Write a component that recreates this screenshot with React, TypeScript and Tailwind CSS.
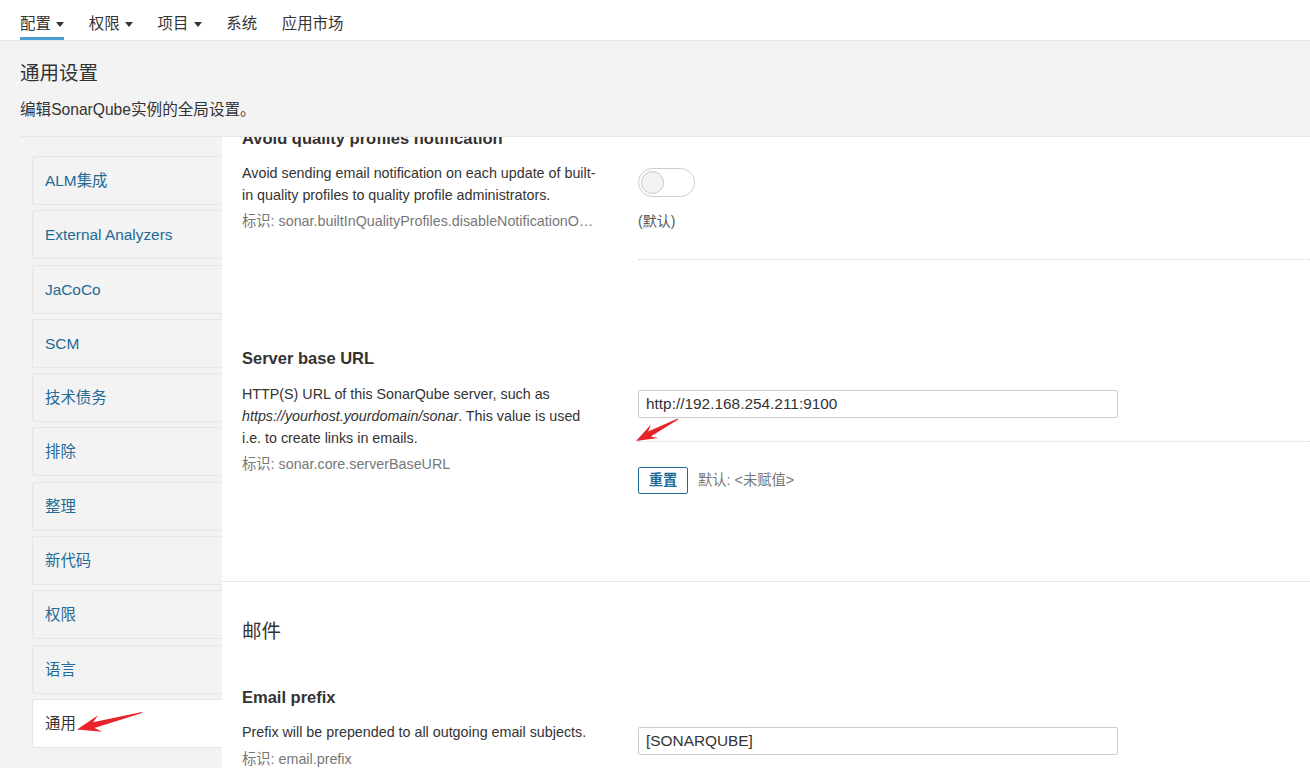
import React from "react";

function arrowPoints(tx: number, ty: number, px: number, py: number, hl: number, hw: number, sw: number) {
  const dx = px - tx;
  const dy = py - ty;
  const len = Math.sqrt(dx * dx + dy * dy);
  const ux = dx / len;
  const uy = dy / len;
  const nx = -uy;
  const ny = ux;
  const jx = px - ux * hl * 0.72;
  const jy = py - uy * hl * 0.72;
  const bx = px - ux * hl;
  const by = py - uy * hl;
  const pts: [number, number][] = [
    [tx + nx * 0.5, ty + ny * 0.5],
    [jx + (nx * sw) / 2, jy + (ny * sw) / 2],
    [bx + (nx * hw) / 2, by + (ny * hw) / 2],
    [px, py],
    [bx - (nx * hw) / 2, by - (ny * hw) / 2],
    [jx - (nx * sw) / 2, jy - (ny * sw) / 2],
    [tx - nx * 0.5, ty - ny * 0.5],
  ];
  return pts.map((p) => `${p[0].toFixed(1)},${p[1].toFixed(1)}`).join(" ");
}

const navItems = [
  { label: "配置", caret: true, active: true },
  { label: "权限", caret: true },
  { label: "项目", caret: true },
  { label: "系统" },
  { label: "应用市场" },
];

const sideItems = [
  "ALM集成",
  "External Analyzers",
  "JaCoCo",
  "SCM",
  "技术债务",
  "排除",
  "整理",
  "新代码",
  "权限",
  "语言",
  "通用",
];

export default function App() {
  return (
    <div className="relative w-[1310px] h-[768px] overflow-hidden bg-[#f3f3f3] text-[#333] font-['Liberation_Sans','Noto_Sans_CJK_SC',sans-serif]">
      {/* top nav */}
      <div className="h-[41px] bg-white border-b border-[#e6e6e6] flex items-stretch pl-[20px] text-[15.4px]">
        {navItems.map((it) => (
          <div
            key={it.label}
            className={
              "flex items-center pt-[11px] mr-[24.6px] border-b-[3px] " +
              (it.active ? "border-[#4b9fd5]" : "border-transparent")
            }
          >
            <span className="leading-[20px]">{it.label}</span>
            {it.caret && (
              <span className="ml-[5.4px] w-0 h-0 border-x-[4.5px] border-x-transparent border-t-[5px] border-t-[#333]" />
            )}
          </div>
        ))}
      </div>

      {/* page header */}
      <div className="ml-[20px] h-[96px] border-b border-[#e6e6e6] pt-[20px]">
        <div className="text-[19.5px] leading-[24px]">通用设置</div>
        <div className="mt-[15px] text-[15.6px] leading-[20px]">编辑SonarQube实例的全局设置。</div>
      </div>

      {/* main */}
      <div className="flex h-[631px]">
        {/* sidebar */}
        <div className="w-[222px] shrink-0 pl-[32px] pt-[19px] flex flex-col gap-[5.3px]">
          {sideItems.map((s) => {
            const active = s === "通用";
            return (
              <div
                key={s}
                className={
                  "h-[49px] shrink-0 border border-r-0 border-[#e6e6e6] rounded-l-[3px] pl-[12px] flex items-center text-[15.4px] " +
                  (active ? "bg-white text-[#333]" : "bg-[#f3f3f3] text-[#236a97]")
                }
              >
                {s}
              </div>
            );
          })}
        </div>

        {/* content */}
        <div className="flex-1 bg-white overflow-hidden">
          {/* setting 1 */}
          <div className="h-[211px] flex pl-[20px]">
            <div className="w-[356px] mr-[40px] shrink-0">
              <div className="-mt-[9px] text-[16.5px] font-bold leading-[20px]">Avoid quality profiles notification</div>
              <div className="mt-[14px] text-[14.3px] leading-[22px]">
                Avoid sending email notification on each update of built-
                <br />
                in quality profiles to quality profile administrators.
              </div>
              <div className="mt-[6px] text-[14.3px] leading-[18px] text-[#777] truncate">
                标识: sonar.builtInQualityProfiles.disableNotificationOnUpdate
              </div>
            </div>
            <div className="flex-1 pt-[31px]">
              <div className="border-b border-dotted border-[#d8d8d8] pb-[29px]">
                <div className="w-[57px] h-[29px] rounded-full border border-[#cdcdcd] bg-white p-[2px]">
                  <div className="w-[23px] h-[23px] rounded-full bg-[#f3f3f3] border border-[#c8c8c8]" />
                </div>
                <div className="mt-[15px] text-[14px] leading-[18px] text-[#555]">(默认)</div>
              </div>
            </div>
          </div>

          {/* setting 2 */}
          <div className="h-[234px] flex pl-[20px] border-b border-[#e6e6e6]">
            <div className="w-[356px] mr-[40px] shrink-0">
              <div className="text-[16.5px] font-bold leading-[20px]">Server base URL</div>
              <div className="mt-[15px] text-[14.3px] leading-[22px]">
                HTTP(S) URL of this SonarQube server, such as
                <br />
                <em>https://yourhost.yourdomain/sonar</em>. This value is used
                <br />
                i.e. to create links in emails.
              </div>
              <div className="mt-[6px] text-[14.3px] leading-[18px] text-[#777] truncate">标识: sonar.core.serverBaseURL</div>
            </div>
            <div className="flex-1 pt-[42px]">
              <div className="border-b border-dotted border-[#d8d8d8] pb-[23px]">
                <input
                  readOnly
                  value="http://192.168.254.211:9100"
                  className="block w-[480px] h-[28px] border border-[#cdcdcd] rounded-[2px] px-[7px] text-[15.4px] text-[#333] outline-none bg-white"
                />
              </div>
              <div className="mt-[25px] flex items-center">
                <button className="h-[27px] w-[50px] border border-[#236a97] rounded-[2px] text-[#236a97] font-bold text-[14.3px] bg-white flex items-center justify-center">
                  重置
                </button>
                <span className="ml-[10px] text-[14.3px] text-[#777]">默认: &lt;未赋值&gt;</span>
              </div>
            </div>
          </div>

          {/* setting 3: email */}
          <div className="pt-[37px] pl-[20px]">
            <div className="text-[19.5px] leading-[24px]">邮件</div>
            <div className="mt-[44px] flex">
              <div className="w-[356px] mr-[40px] shrink-0">
                <div className="text-[16.5px] font-bold leading-[20px]">Email prefix</div>
                <div className="mt-[14px] text-[14.3px] leading-[22px]">Prefix will be prepended to all outgoing email subjects.</div>
                <div className="mt-[7px] text-[14.3px] leading-[18px] text-[#777] truncate">标识: email.prefix</div>
              </div>
              <div className="flex-1 pt-[40px]">
                <input
                  readOnly
                  value="[SONARQUBE]"
                  className="block w-[480px] h-[28px] border border-[#cdcdcd] rounded-[2px] px-[7px] text-[15.4px] text-[#333] outline-none bg-white"
                />
              </div>
            </div>
          </div>
        </div>
      </div>

      {/* annotation arrows */}
      <svg className="absolute left-0 top-0 pointer-events-none" width="1310" height="768" viewBox="0 0 1310 768">
        <polygon points={arrowPoints(142, 712.5, 77, 729.5, 24, 17, 6)} fill="#e8232a" />
        <polygon points={arrowPoints(678, 419, 636, 441, 21, 15, 5.5)} fill="#e8232a" />
      </svg>
    </div>
  );
}
